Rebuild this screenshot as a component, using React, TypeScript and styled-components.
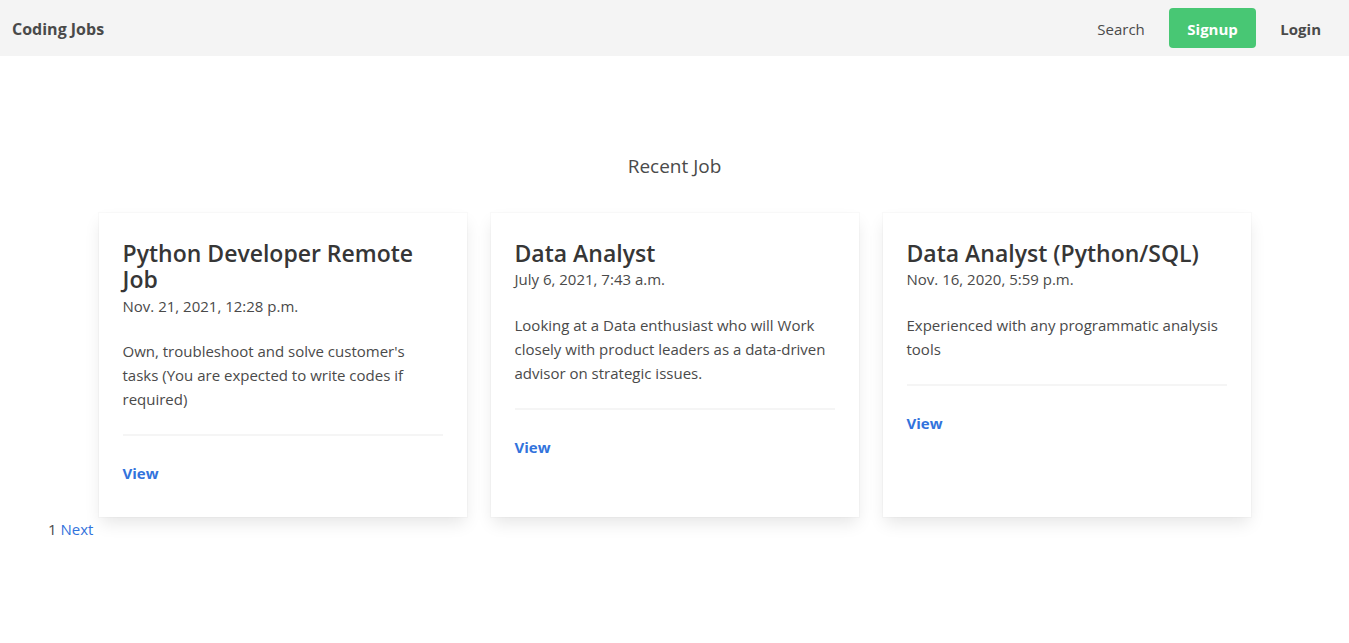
import React from 'react';
import styled, { createGlobalStyle } from 'styled-components';

interface Job {
  id: number;
  title: string;
  posted: string;
  description: string;
}

const jobs: Job[] = [
  {
    id: 1,
    title: 'Python Developer Remote Job',
    posted: 'Nov. 21, 2021, 12:28 p.m.',
    description: "Own, troubleshoot and solve customer's tasks (You are expected to write codes if required)",
  },
  {
    id: 2,
    title: 'Data Analyst',
    posted: 'July 6, 2021, 7:43 a.m.',
    description:
      'Looking at a Data enthusiast who will Work closely with product leaders as a data-driven advisor on strategic issues.',
  },
  {
    id: 3,
    title: 'Data Analyst (Python/SQL)',
    posted: 'Nov. 16, 2020, 5:59 p.m.',
    description: 'Experienced with any programmatic analysis tools',
  },
];

const GlobalStyle = createGlobalStyle`
  html, body {
    margin: 0;
    padding: 0;
    background: #fff;
  }
  body {
    font-family: "Open Sans", "Noto Sans", "Liberation Sans", sans-serif;
    font-size: 16px;
    line-height: 1.5;
    color: #4a4a4a;
  }
  * {
    box-sizing: border-box;
  }
`;

const Navbar = styled.nav`
  display: flex;
  align-items: stretch;
  justify-content: space-between;
  height: 56px;
  background-color: #f4f4f4;
`;

const NavGroup = styled.div`
  display: flex;
  align-items: center;
  padding-right: 16px;
`;

const Brand = styled.a`
  display: flex;
  align-items: center;
  padding: 2px 12px 0;
  font-weight: 700;
  font-size: 16px;
  color: #4a4a4a;
  text-decoration: none;
`;

const NavItem = styled.a<{ bold?: boolean }>`
  display: flex;
  align-items: center;
  padding: 10px 12px 8px;
  font-size: 15px;
  font-weight: ${props => (props.bold ? 700 : 400)};
  color: #4a4a4a;
  text-decoration: none;
`;

const SignupButton = styled.a`
  display: inline-flex;
  align-items: center;
  height: 40px;
  margin: 0 12px;
  padding: 2px 18.5px 0;
  border-radius: 4px;
  background-color: #48c774;
  color: #fff;
  font-size: 15px;
  font-weight: 700;
  text-decoration: none;
`;

const Section = styled.section`
  padding: 99px 0 0;
`;

const Subtitle = styled.h2`
  margin: 0 0 34px;
  text-align: center;
  font-size: 19px;
  font-weight: 400;
  line-height: 1.25;
  color: #4a4a4a;
`;

const Container = styled.div`
  width: 1152px;
  margin: 0 auto;
`;

const Columns = styled.div`
  display: grid;
  grid-template-columns: repeat(3, 1fr);
  gap: 24px;
`;

const Card = styled.div`
  display: flex;
  flex-direction: column;
  min-height: 304px;
  padding: 27px 24px 24px;
  background: #fff;
  box-shadow: 0 8px 16px -2px rgba(10, 10, 10, 0.1), 0 0 0 1px rgba(10, 10, 10, 0.02);
`;

const JobTitle = styled.h3`
  margin: 0 0 2px;
  font-size: 23px;
  font-weight: 600;
  line-height: 1.15;
  color: #363636;
`;

const Posted = styled.p`
  margin: 0 0 22px;
  font-size: 15px;
`;

const Description = styled.p`
  margin: 0;
  font-size: 15px;
  line-height: 24px;
`;

const Divider = styled.hr`
  height: 2px;
  margin: 23px 0 25px;
  border: none;
  background-color: #f5f5f5;
`;

const ViewLink = styled.a`
  font-size: 15px;
  font-weight: 700;
  color: #3273dc;
  text-decoration: none;
`;

const Pagination = styled.div`
  padding: 1px 48px;
  font-size: 15px;
`;

const PageLink = styled.a`
  color: #3273dc;
  text-decoration: none;
`;

const JobCard: React.FC<{ job: Job }> = ({ job }) => (
  <Card>
    <JobTitle>{job.title}</JobTitle>
    <Posted>{job.posted}</Posted>
    <Description>{job.description}</Description>
    <Divider />
    <div>
      <ViewLink href="#">View</ViewLink>
    </div>
  </Card>
);

const App: React.FC = () => (
  <>
    <GlobalStyle />
    <Navbar>
      <Brand href="#">Coding Jobs</Brand>
      <NavGroup>
        <NavItem href="#">Search</NavItem>
        <SignupButton href="#">Signup</SignupButton>
        <NavItem href="#" bold>
          Login
        </NavItem>
      </NavGroup>
    </Navbar>
    <Section>
      <Subtitle>Recent Job</Subtitle>
      <Container>
        <Columns>
          {jobs.map(job => (
            <JobCard key={job.id} job={job} />
          ))}
        </Columns>
      </Container>
      <Pagination>
        1 <PageLink href="#">Next</PageLink>
      </Pagination>
    </Section>
  </>
);

export default App;
